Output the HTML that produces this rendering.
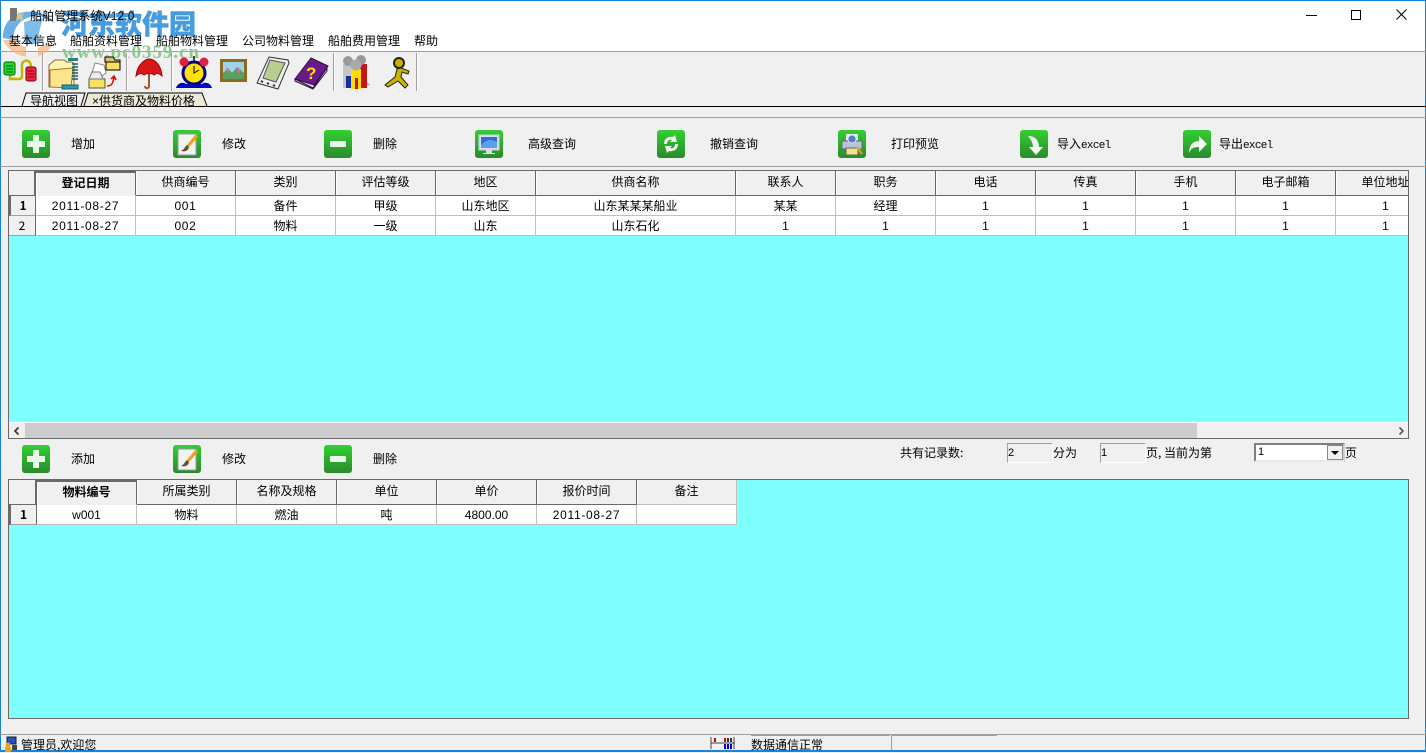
<!DOCTYPE html>
<html><head><meta charset="utf-8"><style>
html,body{margin:0;padding:0;background:#f0f0f0}
body{width:1426px;height:752px;overflow:hidden;position:relative;font:12px/14px "WenQuanYi Zen Hei","Noto Sans CJK SC","Liberation Sans",sans-serif;color:#000}
.a{position:absolute;white-space:nowrap}
.ico{position:absolute;width:28px;height:28px}
.sep{position:absolute;top:53px;width:1px;height:38px;background:#a0a0a0;border-right:1px solid #fff}
.grid{position:absolute;background:#80ffff;overflow:hidden;box-sizing:border-box;border:1px solid #696969}
table{border-collapse:separate;border-spacing:0;table-layout:fixed;position:absolute;left:0;top:0}
td,th{padding:0;text-align:center;font-weight:normal;overflow:hidden;white-space:nowrap;box-sizing:border-box}
th{height:25px;background:#f0f0f0;border-right:1px solid #696969;border-bottom:1px solid #696969;padding-bottom:3px;box-shadow:inset 1px 0 #fff}
td{height:20px;background:#fff;border-right:1px solid #c0c0c0;border-bottom:1px solid #c0c0c0}
td.r{background:#f0f0f0;border-right:1px solid #696969;border-bottom:1px solid #a0a0a0}
.d{letter-spacing:.7px}
.inp{position:absolute;width:46px;height:20px;box-sizing:border-box;border:1px solid;border-color:#a0a0a0 #fff #fff #a0a0a0;font-size:11px;line-height:18px;padding-left:0}
.lat{font-family:"Liberation Sans",sans-serif}
</style></head><body>
<div class="a" style="left:0;top:0;width:1426px;height:51px;background:#fff"></div>
<div class="a" style="left:0;top:0;width:1426px;height:1px;background:#1883d7"></div>
<div class="a" style="left:0;top:0;width:1px;height:752px;background:#1883d7"></div>
<div class="a" style="left:1425px;top:0;width:1px;height:752px;background:#1883d7"></div>
<div class="a" style="left:0;top:750px;width:1426px;height:2px;background:#1883d7"></div>
<div class="a" style="left:0;top:51px;width:1426px;height:1px;background:#a0a0a0"></div>

<!-- watermark -->
<svg class="a" style="left:0;top:0;opacity:.7" width="62" height="62" viewBox="0 0 62 62">
<path d="M3 38C2 20 18 9 36 12C44 13 50 17 55 23L42 17C30 14 14 20 13 40Z" fill="#2f8fdc"/>
<path d="M24 22L43 18C40 28 38 36 38 44L25 44Z" fill="#4aa0e2"/>
<path d="M3 40C8 52 22 58 34 57C44 56 50 50 53 43L38 48V57H26V47C20 46 15 43 12 40Z" fill="#f3b07a"/>
</svg>
<div class="a" style="left:61px;top:6px;font:900 27px/34px 'Noto Sans CJK SC',sans-serif;color:#3d97dd;-webkit-text-stroke:.5px #3d97dd;opacity:.95">河东软件园</div>
<div class="a" style="left:62px;top:44px;font:bold 19px/18px 'Liberation Serif',serif;color:#84c484;letter-spacing:.95px;opacity:.9">www.pc0359.cn</div>

<!-- title -->
<svg class="a" style="left:9px;top:7px" width="16" height="16"><rect x="1" y="1" width="7" height="13" fill="#777"/><path d="M9 4l3 4 3-2-2 4 2 4-5-2-3 2 1-5z" fill="#cc9"/></svg>
<div class="a" style="left:30px;top:9px;letter-spacing:.1px">船舶管理系统<span class="lat">V12.0</span></div>
<div class="a" style="left:1306px;top:15px;width:11px;height:1px;background:#000"></div>
<div class="a" style="left:1351px;top:10px;width:8px;height:8px;border:1px solid #000"></div>
<svg class="a" style="left:1396px;top:9px" width="11" height="11"><path d="M.5.5l10 10M10.500.5l-10 10" stroke="#000" fill="none"/></svg>

<!-- menu -->
<div class="a" style="left:9px;top:34px">基本信息</div>
<div class="a" style="left:70px;top:34px">船舶资料管理</div>
<div class="a" style="left:156px;top:34px">船舶物料管理</div>
<div class="a" style="left:242px;top:34px">公司物料管理</div>
<div class="a" style="left:328px;top:34px">船舶费用管理</div>
<div class="a" style="left:414px;top:34px">帮助</div>

<!-- toolbar -->
<div class="sep" style="left:42px"></div><div class="sep" style="left:126px"></div><div class="sep" style="left:171px"></div><div class="sep" style="left:333px"></div><div class="sep" style="left:416px"></div>
<svg class="a" style="left:0;top:52px" width="420" height="40" viewBox="0 0 420 40">
<!-- connect -->
<path d="M10 22v5h9c3 0 3-2 3-5v-9c0-4 4-5 6-4s3 3 3 6" fill="none" stroke="#c8b400" stroke-width="2.500"/>
<rect x="4" y="10" width="11" height="13" rx="2" fill="#22dd22" stroke="#060"/>
<path d="M6 14h7M6 17h7M6 20h7" stroke="#063"/>
<rect x="26" y="15" width="10" height="14" rx="2" fill="#ee2244" stroke="#700"/>
<path d="M28 19h6M28 22h6M28 25h6" stroke="#800"/>
<!-- folder compress -->
<path d="M49 13l6-5h9l3 2h5l2 2v22l-25 1z" fill="#fff3b0" stroke="#8a6a30"/>
<path d="M50 18l23-2-2 20-21-1z" fill="#fbe48a" stroke="#a07830"/>
<path d="M68 6h10v3H68z" fill="#2a7f8a"/>
<path d="M72 12h6M72 15h6M72 18h6M72 21h6M72 24h6M72 27h6" stroke="#16606a" stroke-width="1.500"/>
<path d="M62 33h16v4H62z" fill="#2a9ab0" stroke="#16606a"/>
<!-- folders -->
<path d="M106 8h14v10h-14z" fill="#f8e060" stroke="#000"/><path d="M105 5h8l2 3h5v2h-15z" fill="#dbc46a" stroke="#000"/>
<path d="M95 11l9 2 2 8-8 6-6-6z" fill="#fff" stroke="#888"/>
<path d="M89 27h16v9H89z" fill="#f8e060" stroke="#555"/><path d="M92 20h8l3 7H89z" fill="#eee" stroke="#777"/>
<path d="M107 34c5 0 6-3 7-9M111 27l3-3 2 4" fill="none" stroke="#e00" stroke-width="1.500"/>
<!-- umbrella -->
<path d="M136 24C137 12 146 7 149 7c5 0 12 5 13 17-3-3-6-3-8-1-2-2-8-2-10 0-2-2-5-2-8 1z" fill="#d81818" stroke="#a00"/>
<path d="M149 22v12c0 3-4 3-4 0" fill="none" stroke="#a0522d" stroke-width="2"/>
<!-- clock -->
<path d="M178 36c2-6 8-6 10-4h16c2-2 8-2 10 4z" fill="#0000c0" transform="translate(-2 0)"/>
<circle cx="194" cy="21" r="11" fill="#ffe000" stroke="#00008b" stroke-width="3"/>
<path d="M194 14v7l5-3" stroke="#000" fill="none"/>
<circle cx="184" cy="10" r="4.500" fill="#e02040"/><circle cx="204" cy="10" r="4.500" fill="#e02040"/>
<path d="M194 4v5" stroke="#444" stroke-width="2"/>
<!-- picture -->
<rect x="220" y="7" width="27" height="23" fill="#8a6d20"/>
<rect x="223" y="10" width="21" height="17" fill="#9ed4e8"/>
<path d="M223 21l5-5 4 5 5-6 7 6v6h-21z" fill="#5ca060"/><path d="M226 15l4 3-3 2zM238 15l3 3-3 3z" fill="#f060c0"/>
<!-- pda -->
<path d="M269 5l19 3 1 3-11 26-21-6z" fill="#eee" stroke="#333"/>
<path d="M270 8l15 3-9 19-13-4z" fill="#b8ce90" stroke="#555"/>
<path d="M261 29l2 1M267 31l2 1M273 33l2 1" stroke="#333" stroke-width="2"/>
<!-- book -->
<path d="M295 27L311 6l17 8-14 19z" fill="#6a1a8a" stroke="#301040"/>
<path d="M295 27l18 9 14-20v3l-14 18-18-8z" fill="#e8e8e8" stroke="#301040"/>
<text x="306" y="27" font-family="Liberation Sans" font-weight="bold" font-size="17" fill="#ffe000">?</text>
<!-- people -->
<path d="M358 36l12-3-3-3z" fill="#aaa"/>
<rect x="343" y="12" width="10" height="24" fill="#c4c4c4"/><circle cx="348" cy="9" r="5" fill="#999"/>
<rect x="357" y="12" width="10" height="24" fill="#c01818"/><circle cx="361" cy="8" r="5" fill="#999"/>
<path d="M346 24h6v12h-6z" fill="#1030a0"/>
<rect x="351" y="17" width="10" height="20" fill="#ffdc00"/><circle cx="356" cy="13" r="5.500" fill="#aaa"/><path d="M355 26h3v11h-3z" fill="#c01818"/>
<!-- runner -->
<circle cx="399" cy="11" r="5" fill="#c8b400" stroke="#221" stroke-width="2"/>
<path d="M397 17l-2 8-10 8 3 2 10-6 7 7 3-3-7-8 1-5 6 2 1-3-8-3z" fill="#c8b400" stroke="#221"/>
</svg>

<!-- tabs -->
<svg class="a" style="left:0;top:90px" width="240" height="28">
<path d="M22 16L26 3H85L81 16" fill="#f0f0f0" stroke="#000"/>
<path d="M84 16L88 3H202L207 16" fill="#ece9d8" stroke="#000"/>
</svg>
<div class="a" style="left:30px;top:94px">导航视图</div>
<div class="a" style="left:92px;top:94px"><span class="lat">×</span>供货商及物料价格</div>
<div class="a" style="left:0;top:106px;width:1426px;height:1px;background:#000"></div>
<div class="a" style="left:0;top:117px;width:1426px;height:1px;background:#a0a0a0"></div>
<div class="a" style="left:0;top:166px;width:1426px;height:1px;background:#a0a0a0"></div>

<!-- buttons -->
<svg width="0" height="0" style="position:absolute"><defs><linearGradient id="g" x1="0" y1="0" x2="0" y2="1"><stop offset="0" stop-color="#33cf33"/><stop offset="1" stop-color="#2a8a2c"/></linearGradient></defs></svg>
<svg class="ico" style="left:22px;top:130px" viewBox="0 0 28 28"><rect width="28" height="28" rx="3" fill="url(#g)"/><path d="M11 5h6v6h6v6h-6v6h-6v-6H5v-6h6z" fill="#e8f8e8"/></svg>
<div class="a" style="left:71px;top:137px">增加</div>
<svg class="ico" style="left:173px;top:130px" viewBox="0 0 28 28"><rect width="28" height="28" rx="3" fill="url(#g)"/><rect x="5" y="4" width="18" height="21" fill="#eef4ee" stroke="#99a"/><path d="M23 4L14 15l2 2 9-10z" fill="#f0a020"/><path d="M14 15c-2 1-2 4-6 6 4 1 7 0 8-4z" fill="#6a4a30"/></svg>
<div class="a" style="left:222px;top:137px">修改</div>
<svg class="ico" style="left:324px;top:130px" viewBox="0 0 28 28"><rect width="28" height="28" rx="3" fill="url(#g)"/><rect x="6" y="11" width="16" height="6" rx="1" fill="#e8f8e8"/></svg>
<div class="a" style="left:373px;top:137px">删除</div>
<svg class="ico" style="left:475px;top:130px" viewBox="0 0 28 28"><rect width="28" height="28" rx="3" fill="url(#g)"/><rect x="4" y="5" width="20" height="15" fill="#dde" stroke="#ccd"/><rect x="6" y="7" width="16" height="11" fill="#2a70d8"/><path d="M6 15c6-6 10-6 16-3v6H6z" fill="#5aa0ee"/><path d="M11 20h6v3h3v1H8v-1h3z" fill="#dde"/></svg>
<div class="a" style="left:528px;top:137px">高级查询</div>
<svg class="ico" style="left:657px;top:130px" viewBox="0 0 28 28"><rect width="28" height="28" rx="3" fill="url(#g)"/><path d="M7 14c0-5 4-8 9-7l2-2 2 7-7 0 2-2c-3-1-5 1-5 4zM21 14c0 5-4 8-9 7l-2 2-2-7 7 0-2 2c3 1 5-1 5-4z" fill="#eef8ee"/></svg>
<div class="a" style="left:710px;top:137px">撤销查询</div>
<svg class="ico" style="left:838px;top:130px" viewBox="0 0 28 28"><rect width="28" height="28" rx="3" fill="url(#g)"/><rect x="8" y="4" width="12" height="8" fill="#eee"/><rect x="4" y="11" width="20" height="8" fill="#b8c4d8" stroke="#667"/><rect x="8" y="18" width="12" height="7" fill="#f0e090" stroke="#665"/><circle cx="14" cy="9" r="4" fill="#4a80d0" stroke="#dde"/><path d="M19 17l5 7" stroke="#e8a020" stroke-width="2"/></svg>
<div class="a" style="left:891px;top:137px">打印预览</div>
<svg class="ico" style="left:1020px;top:130px" viewBox="0 0 28 28"><rect width="28" height="28" rx="3" fill="url(#g)"/><path d="M8 6c7 0 11 4 11 11h4l-7 8-7-8h4c0-4-2-7-5-11z" fill="#f0f8f0"/></svg>
<div class="a" style="left:1057px;top:137px">导入<span style="font:11px 'Liberation Mono',monospace;letter-spacing:-.700px">excel</span></div>
<svg class="ico" style="left:1183px;top:130px" viewBox="0 0 28 28"><rect width="28" height="28" rx="3" fill="url(#g)"/><path d="M6 23c0-8 4-12 10-12V6l8 8-8 8v-5c-5 0-8 1-10 6z" fill="#f0f8f0"/></svg>
<div class="a" style="left:1219px;top:137px">导出<span style="font:11px 'Liberation Mono',monospace;letter-spacing:-.700px">excel</span></div>

<!-- grid 1 -->
<div class="grid" style="left:8px;top:170px;width:1401px;height:269px">
<table style="width:1427px"><colgroup><col style="width:27px"><col style="width:100px" span="5"><col style="width:200px"><col style="width:100px" span="7"></colgroup>
<tr><th style="border-right:2px solid #696969;border-bottom-color:#696969;box-shadow:none"></th><th style="font-weight:bold;border-top:2px solid #696969;border-bottom:1px solid #f0f0f0;padding-bottom:2px">登记日期</th><th>供商编号</th><th>类别</th><th>评估等级</th><th>地区</th><th>供商名称</th><th>联系人</th><th>职务</th><th>电话</th><th>传真</th><th>手机</th><th>电子邮箱</th><th>单位地址</th></tr>
<tr><td class="r" style="font-weight:bold;border-left:2px solid #696969">1</td><td class="lat d">2011-08-27</td><td class="lat d">001</td><td>备件</td><td>甲级</td><td>山东地区</td><td>山东某某某船业</td><td>某某</td><td>经理</td><td class="lat">1</td><td class="lat">1</td><td class="lat">1</td><td class="lat">1</td><td class="lat">1</td></tr>
<tr><td class="r">2</td><td class="lat d">2011-08-27</td><td class="lat d">002</td><td>物料</td><td>一级</td><td>山东</td><td>山东石化</td><td class="lat">1</td><td class="lat">1</td><td class="lat">1</td><td class="lat">1</td><td class="lat">1</td><td class="lat">1</td><td class="lat">1</td></tr>
</table>
<div class="a" style="left:0;top:251px;width:1399px;height:16px;background:#f0f0f0;border-top:1px solid #fff;box-sizing:border-box"></div>
<div class="a" style="left:16px;top:252px;width:1172px;height:15px;background:#cdcdcd"></div>
<svg class="a" style="left:4px;top:255px" width="8" height="10"><path d="M5.500 1.500L2 5l3.500 3.500" fill="none" stroke="#333" stroke-width="1.600"/></svg>
<svg class="a" style="left:1388px;top:255px" width="8" height="10"><path d="M2.500 1.500L6 5 2.500 8.500" fill="none" stroke="#555" stroke-width="1.600"/></svg>
</div>

<!-- row 2 buttons -->
<svg class="ico" style="left:22px;top:445px" viewBox="0 0 28 28"><rect width="28" height="28" rx="3" fill="url(#g)"/><path d="M11 5h6v6h6v6h-6v6h-6v-6H5v-6h6z" fill="#e8f8e8"/></svg>
<div class="a" style="left:71px;top:452px">添加</div>
<svg class="ico" style="left:173px;top:445px" viewBox="0 0 28 28"><rect width="28" height="28" rx="3" fill="url(#g)"/><rect x="5" y="4" width="18" height="21" fill="#eef4ee" stroke="#99a"/><path d="M23 4L14 15l2 2 9-10z" fill="#f0a020"/><path d="M14 15c-2 1-2 4-6 6 4 1 7 0 8-4z" fill="#6a4a30"/></svg>
<div class="a" style="left:222px;top:452px">修改</div>
<svg class="ico" style="left:324px;top:445px" viewBox="0 0 28 28"><rect width="28" height="28" rx="3" fill="url(#g)"/><rect x="6" y="11" width="16" height="6" rx="1" fill="#e8f8e8"/></svg>
<div class="a" style="left:373px;top:452px">删除</div>

<div class="a" style="left:900px;top:446px">共有记录数:</div>
<div class="inp lat" style="left:1007px;top:443px">2</div>
<div class="a" style="left:1053px;top:446px">分为</div>
<div class="inp lat" style="left:1100px;top:443px">1</div>
<div class="a" style="left:1146px;top:446px">页, 当前为第</div>
<div class="a lat" style="left:1254px;top:443px;width:91px;height:19px;box-sizing:border-box;background:#fff;border:2px solid;border-color:#808080 #d0d0d0 #e8e8e8 #808080;font-size:11px;line-height:15px;padding-left:2px">1
<div class="a" style="right:0;top:0;width:16px;height:15px;background:#f0f0f0;border:1px solid #888;box-sizing:border-box"></div>
<div class="a" style="right:4px;top:6px;border:4px solid transparent;border-top:4px solid #000;border-bottom:0"></div></div>
<div class="a" style="left:1345px;top:446px">页</div>

<!-- grid 2 -->
<div class="grid" style="left:8px;top:479px;width:1401px;height:240px">
<table style="width:728px"><colgroup><col style="width:28px"><col style="width:100px" span="7"></colgroup>
<tr><th style="border-right:2px solid #696969;box-shadow:none"></th><th style="font-weight:bold;border-top:2px solid #696969;border-bottom:1px solid #f0f0f0;padding-bottom:2px">物料编号</th><th>所属类别</th><th>名称及规格</th><th>单位</th><th>单价</th><th>报价时间</th><th style="border-right:1px solid #c0c0c0;border-bottom-color:#c0c0c0">备注</th></tr>
<tr><td class="r" style="font-weight:bold;border-left:2px solid #696969">1</td><td class="lat">w001</td><td>物料</td><td>燃油</td><td>吨</td><td class="lat">4800.00</td><td class="lat d">2011-08-27</td><td></td></tr>
</table>
</div>

<!-- status -->
<div class="a" style="left:0;top:734px;width:1426px;height:1px;background:#a0a0a0"></div>
<svg class="a" style="left:3px;top:736px" width="17" height="16"><rect x="4" y="1" width="9" height="7" fill="#2a50c0" stroke="#123"/><circle cx="5" cy="9" r="2.500" fill="#e8a020"/><rect x="2" y="11" width="6" height="5" fill="#e8a020"/><rect x="9" y="9" width="5" height="5" fill="#444"/></svg>
<div class="a" style="left:21px;top:738px">管理员,欢迎您</div>
<svg class="a" style="left:710px;top:736px" width="26" height="13"><path d="M1 1v12M24 1v12M1 7h24" stroke="#444" fill="none"/><path d="M5 2v4M15 2v4" stroke="#d00" stroke-width="2"/><path d="M15 8v5M18 8v5M21 8v5" stroke="#00c" stroke-width="2"/><path d="M18 2v4M21 2v4" stroke="#333" stroke-width="2"/></svg>
<div class="a" style="left:751px;top:735px;width:139px;height:1px;background:#a0a0a0"></div>
<div class="a" style="left:891px;top:735px;width:106px;height:1px;background:#a0a0a0"></div>
<div class="a" style="left:891px;top:735px;width:1px;height:15px;background:#a0a0a0"></div>
<div class="a" style="left:751px;top:738px">数据通信正常</div>
</body></html>
